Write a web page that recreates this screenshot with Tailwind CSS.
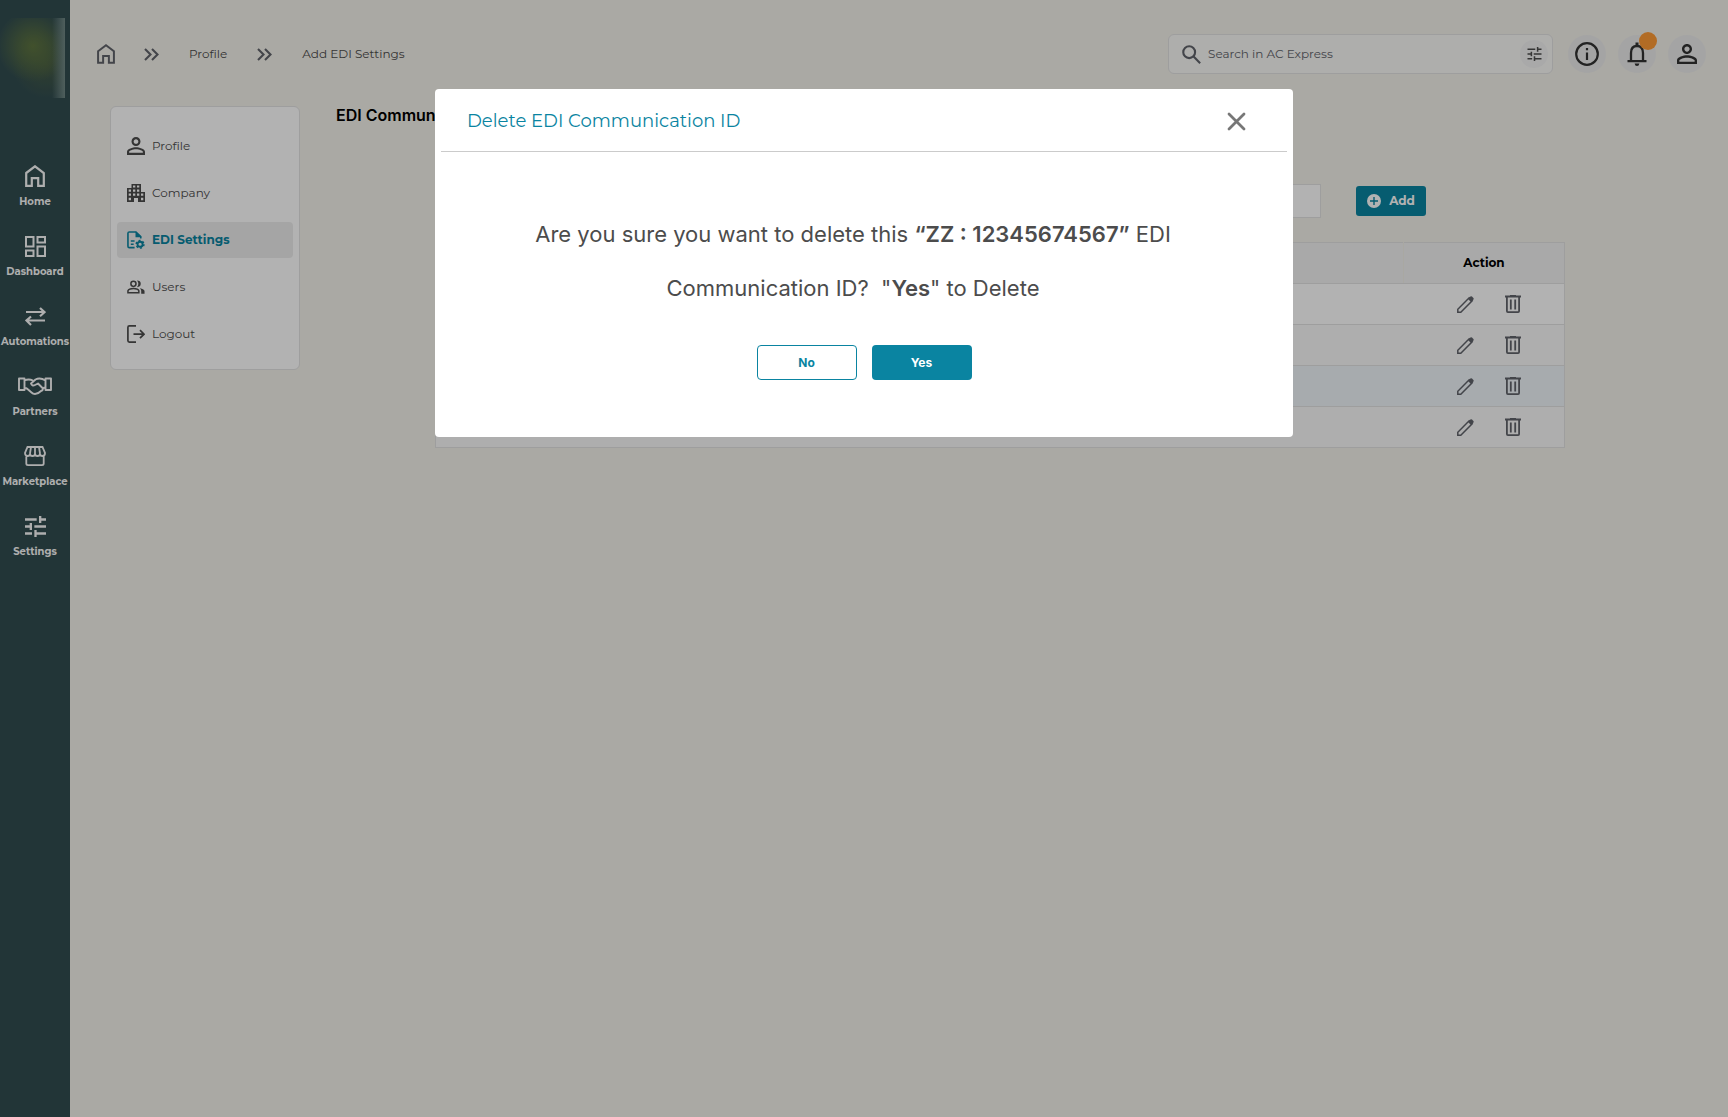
<!DOCTYPE html>
<html lang="en">
<head>
  <meta charset="UTF-8" />
  <meta name="viewport" content="width=device-width, initial-scale=1.0" />
  <title>Add EDI Settings</title>
  <script src="https://cdn.jsdelivr.net/npm/@tailwindcss/browser@4"></script>
</head>
<body class="bg-[#f4f2eb] min-h-screen flex font-[Montserrat,Inter,sans-serif] text-[#4c4c4c]">

  <!-- Icons -->
  <svg class="hidden">
    <symbol id="home" viewBox="0 0 20 22"><path d="M1.200 8 10 1.300 18.800 8v12.800h-5.600v-7.600H6.800v7.600H1.200z" fill="none" stroke="currentColor" stroke-width="2.200" /></symbol>
    <symbol id="chevrons" viewBox="0 0 15 13"><path d="M1 1l5.500 5.500L1 12M8 1l5.500 5.500L8 12" fill="none" stroke="currentColor" stroke-width="2.100" /></symbol>
    <symbol id="tune" viewBox="3 3 18 18"><path fill="currentColor" d="M3 17v2h6v-2H3zM3 5v2h10V5H3zm10 16v-2h8v-2h-8v-2h-2v6h2zM7 9v2H3v2h4v2h2V9H7zm14 4v-2H11v2h10zm-6-4h2V7h4V5h-4V3h-2v6z" /></symbol>
    <symbol id="person" viewBox="4 4 16 16"><path fill="currentColor" d="M12 5.900c1.160 0 2.100.94 2.100 2.100s-.94 2.100-2.100 2.100S9.900 9.160 9.900 8s.94-2.100 2.100-2.100m0 9c2.970 0 6.100 1.460 6.100 2.100v1.100H5.900V17c0-.64 3.130-2.100 6.100-2.100M12 4C9.790 4 8 5.790 8 8s1.790 4 4 4 4-1.790 4-4-1.790-4-4-4zm0 9c-2.670 0-8 1.340-8 4v3h16v-3c0-2.660-5.330-4-8-4z" /></symbol>
    <symbol id="pencil" viewBox="0 0 17 17"><path d="M.8 16.200v-3L12.200 1.800l3 3L3.800 16.200z" fill="none" stroke="currentColor" stroke-width="1.500" /><path d="M11 3 13.400.6q.8-.7 1.600 0L16.400 2q.7.800 0 1.600L14 6z" fill="currentColor" /></symbol>
    <symbol id="trash" viewBox="0 0 16 18"><path d="M0 1.500h16M5 .8h6M1.900 2v14q0 1.100 1 1.100h10.200q1 0 1-1.100V2M5.800 4.500v10M10.200 4.500v10" fill="none" stroke="currentColor" stroke-width="1.800" /></symbol>
  </svg>

  <!-- Sidebar -->
  <nav class="w-[70px] shrink-0 bg-[#324d50] text-[#fafafa] text-[10px] leading-4 font-bold">
    <div class="w-[65px] h-20 mt-[18px] bg-[linear-gradient(90deg,transparent_80%,#728986),radial-gradient(circle_at_33px_28px,#5e7440_0,#5e744099_16px,transparent_36px),radial-gradient(circle_at_46px_46px,#52643d99_0,transparent_34px)]"></div>
    <div class="mt-16 flex flex-col gap-[22px]">
      <a href="#" class="h-12 flex flex-col items-center justify-between">
        <span class="h-7 flex items-center"><svg class="w-5 h-[22px]"><use href="#home" /></svg></span>Home
      </a>
      <a href="#" class="h-12 flex flex-col items-center justify-between">
        <span class="h-7 flex items-center"><svg class="w-[21px] h-[21px]" viewBox="0 0 21 21" fill="none" stroke="currentColor" stroke-width="2"><path d="M1 1h7.500v9.500H1zM12.500 1H20v5.500h-7.500zM12.500 10.500H20V20h-7.500zM1 14.500h7.500V20H1z" /></svg></span>Dashboard
      </a>
      <a href="#" class="h-12 flex flex-col items-center justify-between">
        <span class="h-7 flex items-center"><svg class="w-[21px] h-[19px]" viewBox="0 0 21 19" fill="none" stroke="currentColor" stroke-width="2.200"><path d="M1 5h18M15 1l4.500 4.200L15 9.300M20 13.500H2M6 9.500l-4.500 4L6 18" /></svg></span>Automations
      </a>
      <a href="#" class="h-12 flex flex-col items-center justify-between">
        <span class="h-7 flex items-center"><svg class="w-[34px] h-[18px]" viewBox="0 0 34 18" fill="none" stroke="currentColor" stroke-width="1.900" stroke-linejoin="round"><path d="M1 1.500h5.500v11.500H1zM27.500 1.500H33v11.500h-5.500zM6.500 3.500q4-2 8.500 0M27.500 3.500Q22 0 17.500 2.500L13 6.500q1 3 4 1.500l3-1.500 5 5q0 2-2 2.500-3 3-6 3-2 0-3.500-1.500l-4-3.500q-1-1-3-1M25 11.500q1-1 2.500-1" /></svg></span>Partners
      </a>
      <a href="#" class="h-12 flex flex-col items-center justify-between">
        <span class="h-7 flex items-center"><svg class="w-[22px] h-5" viewBox="0 0 22 20" fill="none" stroke="currentColor" stroke-width="1.800"><path d="M3.500 1h15L21 7q0 3-2.500 3T16 7.500Q16 10 13.500 10T11 7.500Q11 10 8.500 10T6 7.500Q6 10 3.500 10T1 7zM2.300 9.500v8q0 1.600 1.700 1.600h14q1.700 0 1.700-1.600v-8M7 1 6 7.500M11 1v6.500M15 1l1 6.500" /></svg></span>Marketplace
      </a>
      <a href="#" class="h-12 flex flex-col items-center justify-between">
        <span class="h-7 flex items-center"><svg class="w-[21px] h-[21px]"><use href="#tune" /></svg></span>Settings
      </a>
    </div>
  </nav>

  <div class="flex-1 min-w-0">
    <!-- Top bar -->
    <header class="h-[72px] mt-[18px] pl-[27px] pr-[22px] flex items-center text-[12px]">
      <a href="#" aria-label="Home" class="text-[#61636a]"><svg class="w-[18px] h-5"><use href="#home" /></svg></a>
      <svg class="w-[15px] h-[13px] ml-[29px] text-[#61636a]"><use href="#chevrons" /></svg>
      <a href="#" class="ml-[30px]">Profile</a>
      <svg class="w-[15px] h-[13px] ml-[30px] text-[#61636a]"><use href="#chevrons" /></svg>
      <span class="ml-[30px]">Add EDI Settings</span>

      <label class="ml-auto w-[385px] h-10 pl-[13px] pr-1 flex items-center border border-[#e2e2e2] rounded-md bg-[#f9f9f7]">
        <svg class="w-[19px] h-[19px]  text-[#61636a]" viewBox="0 0 18 18" fill="none" stroke="currentColor" stroke-width="2"><circle cx="6.800" cy="6.800" r="5.600" /><path d="m11 11 6.200 6.200" /></svg>
        <input type="search" aria-label="Search" placeholder="Search in AC Express" class="flex-1 ml-[7px] text-[12px] outline-none placeholder:text-[#61636a]" />
        <button aria-label="Filters" class="size-7 rounded-full bg-[#f3f3f3] flex items-center justify-center"><svg class="w-[15px] h-[14px]"><use href="#tune" /></svg></button>
      </label>
      <div class="ml-[15px] flex gap-3 text-[#333]">
        <button aria-label="Information" class="size-[38px] rounded-full bg-[#ebebeb] flex items-center justify-center"><svg class="size-6" viewBox="0 0 24 24" fill="none" stroke="currentColor" stroke-width="2.200"><circle cx="12" cy="12" r="10.800" /><path d="M12 10.500V18M12 6v2.300" /></svg></button>
        <button aria-label="Notifications" class="relative size-[38px] rounded-full bg-[#ebebeb] flex items-center justify-center">
          <svg class="w-5 h-6" viewBox="0 0 20 24"><path d="M4 19v-8q0-7 6-7t6 7v8" fill="none" stroke="currentColor" stroke-width="2.300" /><path d="M.5 18h19v2.200H.5zM8.500.5h3v3.500h-3zM7.600 21.500h4.800q-.4 2.500-2.400 2.500t-2.400-2.500z" fill="currentColor" /></svg>
          <span class="absolute left-[21px] -top-[3px] size-[18px] rounded-full bg-[#ff9b36]"></span>
        </button>
        <button aria-label="Account" class="size-[38px] rounded-full bg-[#ebebeb] flex items-center justify-center"><svg class="size-5"><use href="#person" /></svg></button>
      </div>
    </header>

    <div class="flex items-start pl-10 pt-4">
      <aside class="w-[190px] h-[264px] shrink-0 px-[6px] pt-[21px] border border-[#e2e2e2] rounded-md bg-white text-[12px] flex flex-col gap-[11px]">
        <a href="#" class="h-9 px-[10px] flex items-center gap-[7px]"><svg class="size-[18px]"><use href="#person" /></svg>Profile</a>
        <a href="#" class="h-9 px-[10px] flex items-center gap-[7px]"><svg class="size-[18px]" viewBox="0 0 18 18"><path fill="currentColor" fill-rule="evenodd" d="M4.500 0h9.500v4.500V8h4v10h-7v-4H7v4H0V4h4.500zM6 1.500v2h2.300v-2zm4 0v2h2.300v-2zM1.700 5.500v2.200H4V5.500zm4.300 0v2.200h2.300V5.500zm4 0v2.200h2.300V5.500zM1.700 9.500v2.200H4V9.500zm4.300 0v2.200h2.300V9.500zm4 0v2.200h2.300V9.500zm4 0v2.200h2.300V9.500zM1.700 13.700v2.500H4v-2.500zm12.300 0v2.500h2.300v-2.500z" /></svg>Company</a>
        <a href="#" class="h-9 px-[10px] flex items-center gap-[7px] rounded bg-[#ededed] text-[#0a84a1] font-bold"><svg class="size-[18px]" viewBox="0 0 19 19"><path d="M8 17.500H2.500Q1 17.500 1 16V2.500Q1 1 2.500 1h7l5 5v2M4 10.500h4M4 14h3" fill="none" stroke="currentColor" stroke-width="1.700" /><path d="M9 .5v6h6.500z" fill="currentColor" /><circle cx="13.800" cy="14" r="2.700" fill="none" stroke="currentColor" stroke-width="2" /><circle cx="13.800" cy="14" r="4.100" fill="none" stroke="currentColor" stroke-width="1.500" stroke-dasharray="2.150" /></svg>EDI Settings</a>
        <a href="#" class="h-9 px-[10px] flex items-center gap-[7px]"><svg class="w-[18px] h-[14px]" viewBox="0 0 19 14"><path d="M1 13v-2q1-2.500 5.800-2.500T12.500 11v2z" fill="none" stroke="currentColor" stroke-width="1.600" /><circle cx="6.800" cy="3.700" r="2.700" fill="none" stroke="currentColor" stroke-width="1.600" /><path d="M10.500.2q4 0 4 3.500t-4 3.500q1.500-1.500 1.500-3.500T10.500.2M13.500 8.200Q18.500 9 18.500 11.500V14H15v-3q0-1.800-1.500-2.800" fill="currentColor" /></svg>Users</a>
        <a href="#" class="h-9 px-[10px] flex items-center gap-[7px]"><svg class="size-[18px]" viewBox="0 0 18 18" fill="none" stroke="currentColor" stroke-width="1.700"><path d="M9 .9H2.400Q.9.900.9 2.400v13.200q0 1.500 1.500 1.500H9M6.500 9.200h10M13 5.200l4 4-4 4" /></svg>Logout</a>
      </aside>

      <main class="ml-9 flex-1 max-w-[1229px]">
        <h1 class="text-base leading-[18px] font-semibold font-[Inter,sans-serif] text-black">EDI Communication ID</h1>
        <div class="mt-[60px] ml-[99px] flex items-center">
          <input type="text" aria-label="Communication ID" class="w-[886px] h-[34px] px-3 border border-[#e2e2e2] bg-white" />
          <button class="ml-[35px] w-[70px] h-[30px] rounded-[3px] bg-[#0a84a1] text-white text-[12px] font-bold flex items-center justify-center gap-2">
            <svg class="size-[14px]" viewBox="0 0 14 14"><circle cx="7" cy="7" r="7" fill="currentColor" /><path d="M7 3v8M3 7h8" stroke="#0a84a1" stroke-width="1.400" /></svg>Add
          </button>
        </div>
        <table class="mt-6 ml-[99px] w-[1130px] border-collapse text-[12px]">
          <thead>
            <tr class="h-[41px] bg-[#f3f3f3] text-black">
              <th class="border border-[#e2e2e2] border-r-[#f3f1e9]"></th>
              <th class="w-[161px] border border-[#e2e2e2] border-l-[#f3f1e9]">Action</th>
            </tr>
          </thead>
          <tbody id="rows" class="text-[#61636a]"></tbody>
        </table>
      </main>
    </div>
  </div>

  <!-- Delete dialog -->
  <div class="fixed inset-0 bg-black/30 flex items-start justify-center pt-[89px]">
    <div role="dialog" aria-labelledby="dialogTitle" class="w-[858px] h-[348px] px-[6px] rounded-[4px] bg-white">
      <div class="h-[63px] pt-[3px] pl-[26px] pr-[41px] flex items-center justify-between border-b border-[#cbcbcb]">
        <h2 id="dialogTitle" class="text-[18px] text-[#0a84a1]">Delete EDI Communication ID</h2>
        <button aria-label="Close" onclick="closeDialog()" class="text-[#777]"><svg class="size-[19px]" viewBox="0 0 19 19"><path d="m2 2 15 15M17 2 2 17" stroke="currentColor" stroke-width="2.800" stroke-linecap="round" /></svg></button>
      </div>
      <p class="mt-[55px] pr-[22px] text-center text-[22px] leading-[54px] font-[Inter,sans-serif]">Are you sure you want to delete this <b class="font-semibold">“ZZ : 12345674567”</b> EDI<br />Communication ID?&nbsp; "<b class="font-semibold">Yes</b>" to Delete</p>
      <div class="mt-[30px] flex justify-center gap-[15px] text-[12px] font-bold font-[Inter,sans-serif]">
        <button onclick="closeDialog()" class="w-[100px] h-[35px] rounded-[4px] border border-[#0a84a1] text-[#0a84a1]">No</button>
        <button onclick="closeDialog()" class="w-[100px] h-[35px] rounded-[4px] bg-[#0a84a1] text-white">Yes</button>
      </div>
    </div>
  </div>

  <script>
    const rowColors = ["bg-white", "bg-[#f9f9f9]", "bg-[#eff5fa]", "bg-[#f9f9f9]"];

    document.getElementById("rows").innerHTML = rowColors.map(color => `
      <tr class="h-[41px] border border-[#e2e2e2] ${color}">
        <td></td>
        <td>
          <div class="flex items-center pl-[53px] gap-[31px]">
            <button aria-label="Edit"><svg class="w-[17px] h-[17px]"><use href="#pencil" /></svg></button>
            <button aria-label="Delete"><svg class="w-4 h-[18px]"><use href="#trash" /></svg></button>
          </div>
        </td>
      </tr>`).join("");

    function closeDialog() {
      document.querySelector("[role=dialog]").parentElement.remove();
    }
  </script>
</body>
</html>
